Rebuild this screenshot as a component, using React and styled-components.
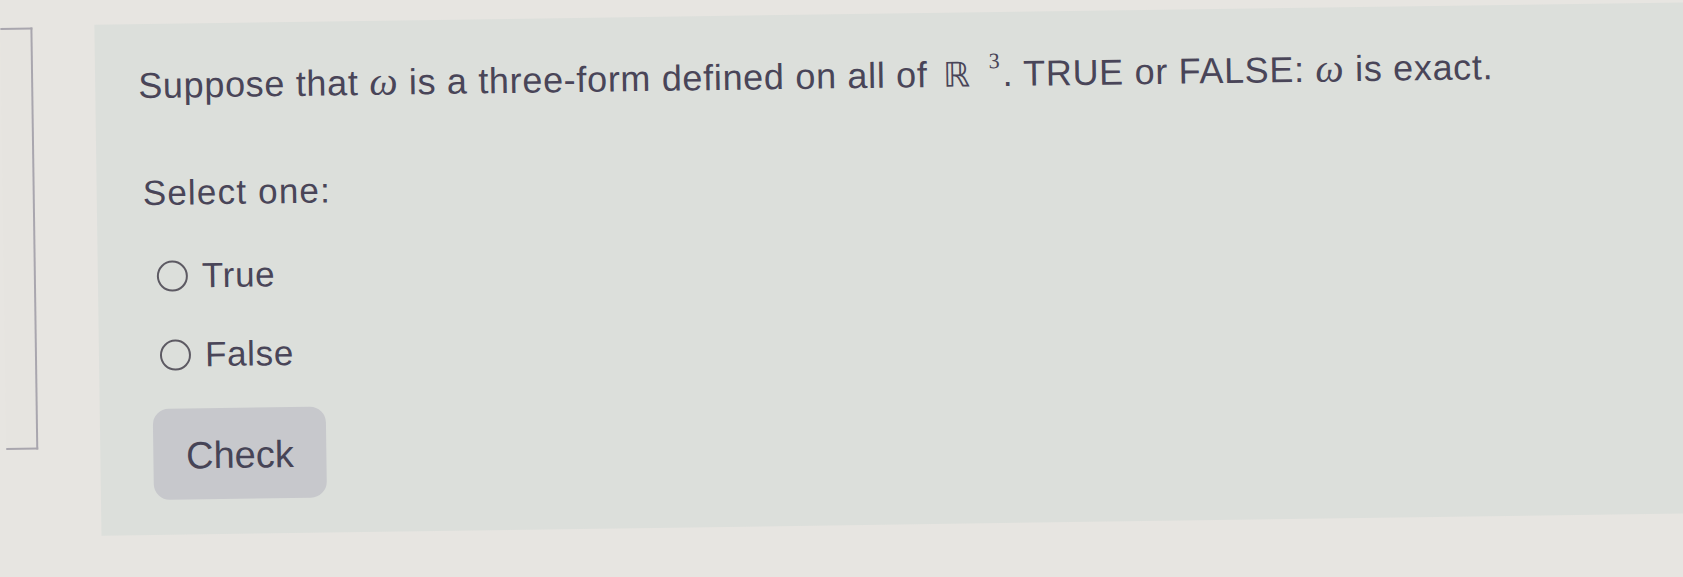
import React from "react";
import styled, { createGlobalStyle } from "styled-components";

const GlobalStyle = createGlobalStyle`
  html, body {
    margin: 0;
    padding: 0;
    background: #e7e5e1;
    overflow: hidden;
    font-family: "Liberation Sans", Arial, sans-serif;
  }
`;

// the photo is tilted a little, so the whole sheet is turned to match
const Page = styled.div`
  display: flex;
  align-items: flex-start;
  width: 1730px;
  height: 577px;
  transform: rotate(-0.8deg);
  transform-origin: 0 0;
`;

const SideBox = styled.div`
  flex: 0 0 30px;
  height: 418px;
  margin-top: 28px;
  border: 2px solid #a9a6ae;
  border-left: none;
  background: #e6e4e0;
`;

const Card = styled.div`
  flex: 1;
  margin-left: 62px;
  margin-top: 26px;
  height: 511px;
  box-sizing: border-box;
  padding: 42px 0 0 43px;
  background: #dcdfdb;
  color: #494558;
`;

const Question = styled.p`
  margin: 0;
  font-size: 36px;
  line-height: 40px;
  letter-spacing: 0.68px;
  white-space: nowrap;
`;

const MathVar = styled.span`
  font-family: "Liberation Serif", serif;
  font-style: italic;
  font-size: 40px;
  line-height: 0;
`;

const Reals = styled.span`
  font-family: "DejaVu Sans", sans-serif;
  font-size: 34px;
  line-height: 0;
  margin-left: 5px;
`;

const Sup = styled.span`
  font-family: "Liberation Serif", serif;
  font-size: 22px;
  line-height: 0;
  margin-left: 18px;
  margin-right: 2px;
  vertical-align: 18px;
`;

const Prompt = styled.p`
  margin: 67px 0 0 3px;
  font-size: 35px;
  line-height: 40px;
  letter-spacing: 1.2px;
`;

const Options = styled.div`
  display: flex;
  flex-direction: column;
  gap: 39px;
  margin: 43px 0 0 16px;
`;

const Option = styled.label`
  display: flex;
  align-items: center;
  gap: 14px;
  margin-left: ${(p) => p.$shift || 0}px;
  font-size: 35px;
  line-height: 40px;
  letter-spacing: 0.7px;
  cursor: pointer;
`;

const Radio = styled.span`
  box-sizing: border-box;
  flex: 0 0 31px;
  height: 31px;
  border: 2.5px solid #5d5a63;
  border-radius: 50%;
`;

const CheckButton = styled.button`
  display: block;
  margin: 34px 0 0 10px;
  width: 173px;
  height: 91px;
  padding: 4px 0 0;
  border: none;
  border-radius: 16px;
  background: #c7c8cc;
  color: #464456;
  font-family: "Liberation Sans", Arial, sans-serif;
  font-size: 38px;
`;

export default function App() {
  return (
    <Page>
      <GlobalStyle />
      <SideBox />
      <Card>
        <Question>
          Suppose that <MathVar>ω</MathVar> is a three-form defined on all of{" "}
          <Reals>ℝ</Reals>
          <Sup>3</Sup>. TRUE or FALSE: <MathVar>ω</MathVar> is exact.
        </Question>
        <Prompt>Select one:</Prompt>
        <Options>
          <Option>
            <Radio />
            True
          </Option>
          <Option $shift={2}>
            <Radio />
            False
          </Option>
        </Options>
        <CheckButton type="button">Check</CheckButton>
      </Card>
    </Page>
  );
}
